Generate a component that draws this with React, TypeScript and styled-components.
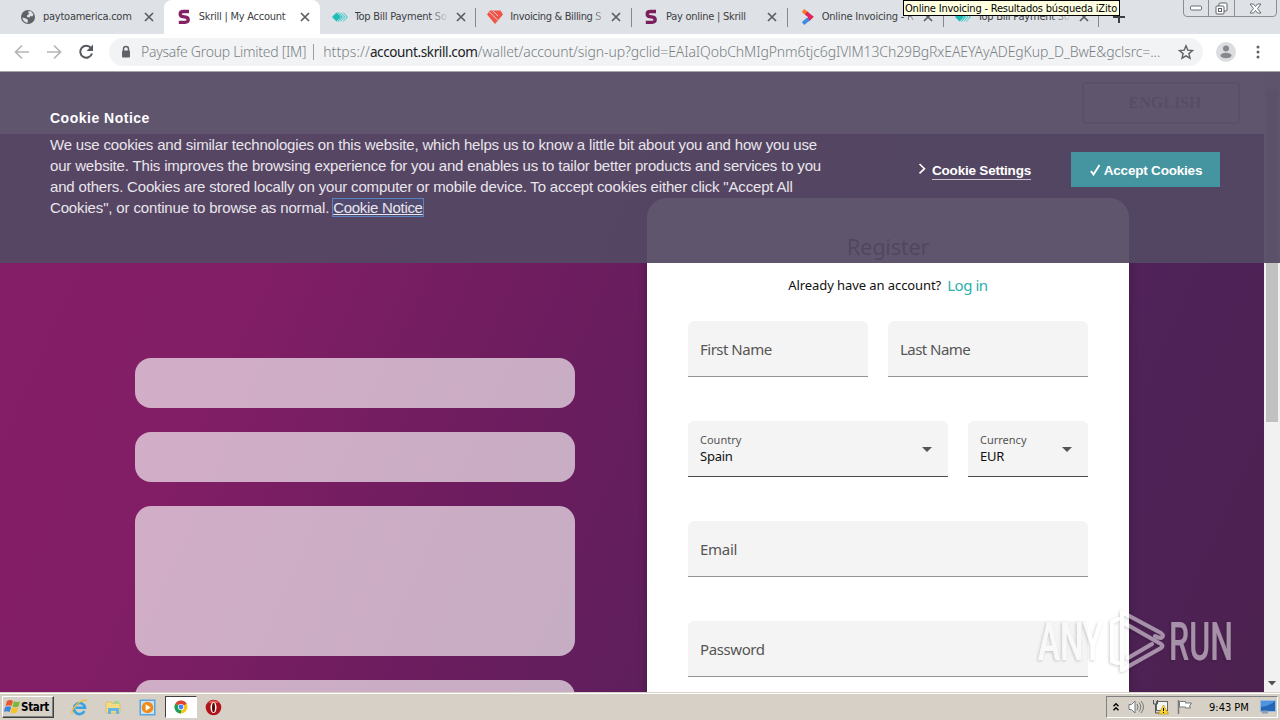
import React from "react";
import styled, { createGlobalStyle } from "styled-components";

const Global = createGlobalStyle`
  * { box-sizing: border-box; }
  body { margin: 0; overflow: hidden; }
`;

const ui = `"DejaVu Sans Condensed", "DejaVu Sans", sans-serif`;
const form = `"Noto Sans", sans-serif`;

const Screen = styled.div`
  position: relative;
  width: 1280px;
  height: 720px;
  display: flex;
  flex-direction: column;
  overflow: hidden;
  font-family: ${ui};
`;

/* ---------- browser chrome ---------- */
const TabStrip = styled.div`
  height: 34px;
  flex: none;
  background: #dee1e6;
  display: flex;
  padding-left: 8px;
`;
const Tab = styled.div<{ $active?: boolean; $line?: boolean }>`
  position: relative;
  width: 155.75px;
  flex: none;
  height: 34px;
  display: flex;
  align-items: center;
  padding-left: 12px;
  color: #3c4043;
  background: ${(p) => (p.$active ? "#fff" : "transparent")};
  border-radius: 8px 8px 0 0;
  &::after {
    content: "";
    position: absolute;
    right: -1px;
    top: 8px;
    width: 1px;
    height: 19px;
    background: ${(p) => (p.$line ? "#85898f" : "transparent")};
  }
  svg { flex: none; }
`;
const TabTitle = styled.span<{ $spacing: number }>`
  width: 94px;
  margin: 0 7px 0 7px;
  font-size: 11px;
  line-height: 18px;
  white-space: nowrap;
  overflow: hidden;
  letter-spacing: ${(p) => p.$spacing}px;
`;
const Fade = styled.span`
  background: linear-gradient(90deg, #6c7074 0, #dee1e6 14px);
  background-clip: text;
  color: transparent;
`;
const NewTab = styled.div`
  display: flex;
  align-items: center;
  padding-left: 15px;
`;
const WindowButtons = styled.div`
  position: absolute;
  top: -1px;
  left: 1183px;
  display: flex;
  height: 18px;
  border: 1px solid #8b8e94;
  border-radius: 0 0 4px 4px;
`;
const WindowButton = styled.div<{ $w: number }>`
  width: ${(p) => p.$w}px;
  display: grid;
  place-items: center;
  border-right: 1px solid #8b8e94;
  &:last-child { border-right: 0; }
`;
const Tooltip = styled.div`
  position: absolute;
  top: 0;
  left: 903px;
  width: 217px;
  height: 16px;
  border: 1px solid #000;
  background: #ffffe1;
  color: #000;
  font-size: 11px;
  line-height: 15px;
  padding-left: 1px;
  white-space: nowrap;
  letter-spacing: -0.2px;
`;
const Toolbar = styled.div`
  height: 38px;
  flex: none;
  background: #fff;
  border-bottom: 1px solid #a5a5ab;
  display: flex;
  align-items: center;
  padding: 0 13px 1px;
`;
const NavIcons = styled.div`
  display: flex;
  gap: 14px;
  width: 96px;
`;
const Omnibox = styled.div`
  width: 1094px;
  height: 28px;
  border-radius: 14px;
  background: #f1f3f4;
  display: flex;
  align-items: center;
  padding: 0 9px 0 11px;
  svg { flex: none; }
`;
const Url = styled.div`
  flex: 1;
  min-width: 0;
  margin-left: 9px;
  padding-bottom: 1px;
  font-size: 14px;
  font-weight: 300;
  font-family: "Noto Sans", sans-serif;
  color: #7b7f84;
  white-space: nowrap;
  display: flex;
  align-items: baseline;
`;
const UrlPart = styled.span<{ $ls: number; $dark?: boolean }>`
  letter-spacing: ${(p) => p.$ls}px;
  color: ${(p) => (p.$dark ? "#202124" : "inherit")};
  font-weight: ${(p) => (p.$dark ? 400 : 300)};
  font-size: ${(p) => (p.$dark ? 13.5 : 14)}px;
`;
const UrlLine = styled.i`
  width: 1px;
  height: 16px;
  align-self: center;
  margin: 0 9px 0 7px;
  background: #9a9da1;
`;
const RightIcons = styled.div`
  display: flex;
  align-items: center;
  gap: 16px;
  margin-left: 13px;
`;

/* ---------- page ---------- */
const Viewport = styled.div`
  height: 620px;
  flex: none;
  display: flex;
  overflow: hidden;
`;
const Page = styled.div`
  width: 1264px;
  height: 620px;
  overflow: hidden;
  background: linear-gradient(114deg, #851f67 0%, #821e66 22%, #6a1d5e 46%, #50225a 78%, #4c2250 100%);
`;
const Header = styled.header`
  height: 62px;
  background: #fff;
  display: flex;
  justify-content: flex-end;
  padding: 10px 24px 0 0;
`;
const Language = styled.div`
  width: 158px;
  height: 42px;
  border: 2px solid #b4b4b4;
  border-radius: 4px;
  text-align: center;
  padding-left: 8px;
  font: bold 16px/38px "Liberation Serif", serif;
  letter-spacing: 0;
  color: #858585;
`;
const Columns = styled.main`
  display: flex;
  align-items: flex-start;
  padding: 64px 0 0 135px;
`;
const Placeholders = styled.div`
  width: 440px;
  margin: 160px 72px 0 0;
  display: flex;
  flex-direction: column;
  gap: 24px;
`;
const Placeholder = styled.div<{ $h: number }>`
  height: ${(p) => p.$h}px;
  border-radius: 16px;
  background: rgba(255, 255, 255, 0.64);
`;
const Card = styled.section`
  width: 482px;
  height: 640px;
  border-radius: 20px;
  background: #fff;
  padding: 33px 41px 0;
  font-family: ${form};
  box-shadow: 0 3px 10px rgba(0, 0, 0, 0.25);
`;
const Title = styled.h1`
  margin: 0;
  text-align: center;
  font-size: 22px;
  font-weight: 400;
  line-height: 30px;
  letter-spacing: -0.35px;
  color: #333;
`;
const LoginRow = styled.div`
  height: 20px;
  margin: 14px 0 26px;
  display: flex;
  justify-content: center;
  align-items: center;
  gap: 6px;
  font-size: 13px;
  letter-spacing: -0.08px;
  white-space: nowrap;
  color: #111;
`;
const LoginLink = styled.a`
  font-size: 15px;
  letter-spacing: -0.45px;
  color: #2bb0ad;
`;
const FieldRow = styled.div<{ $cols: string }>`
  display: grid;
  grid-template-columns: ${(p) => p.$cols};
  gap: 20px;
  margin-bottom: 44px;
`;
const Field = styled.div<{ $dark?: boolean }>`
  height: 56px;
  padding: 0 16px 0 12px;
  display: flex;
  align-items: center;
  justify-content: space-between;
  background: #f4f4f4;
  border-radius: 6px 6px 0 0;
  border-bottom: 1px solid ${(p) => (p.$dark ? "#4a4a4a" : "#939393")};
  color: #555;
  font-size: 15px;
  white-space: nowrap;
  svg { margin-top: 2px; }
`;
const FieldLabel = styled.span<{ $ls: number }>`
  letter-spacing: ${(p) => p.$ls}px;
  padding-top: 1px;
`;
const Stack = styled.div`
  display: flex;
  flex-direction: column;
  padding-bottom: 2px;
  font-size: 13px;
  line-height: 16px;
  letter-spacing: -0.25px;
  color: #111;
`;
const SmallLabel = styled.span`
  font-size: 11px;
  color: #555;
  letter-spacing: 0;
`;
const Scrollbar = styled.div`
  width: 16px;
  background: #f1f1f1;
  display: flex;
  flex-direction: column;
  align-items: center;
  justify-content: space-between;
  padding: 17px 0 6px;
`;
const Thumb = styled.div`
  width: 12px;
  height: 333px;
  background: #c1c1c1;
`;

/* ---------- cookie banner ---------- */
const Banner = styled.aside`
  position: absolute;
  top: 72px;
  left: 0;
  width: 1280px;
  height: 191px;
  background: rgba(83, 73, 99, 0.93);
  color: #fff;
  font-family: "Liberation Sans", Arial, sans-serif;
  display: flex;
  align-items: flex-start;
  padding: 37px 60px 0 50px;
`;
const BannerText = styled.div`
  width: 820px;
  font-size: 15px;
  line-height: 21px;
  white-space: nowrap;
`;
const BannerTitle = styled.div`
  font-size: 14px;
  line-height: 18px;
  font-weight: bold;
  letter-spacing: 0.5px;
  margin-bottom: 7px;
`;
const Line = styled.div<{ $ls: number }>`
  letter-spacing: ${(p) => p.$ls}px;
  color: #e9e5ec;
`;
const NoticeLink = styled.a`
  text-decoration: underline;
  outline: 1px solid #5b83c4;
  background: rgba(70, 90, 140, 0.3);
  letter-spacing: -0.3px;
`;
const Settings = styled.div`
  margin: 49px 0 0 48px;
  width: 153px;
  display: flex;
  align-items: center;
  gap: 6px;
  height: 22px;
  font-size: 13.5px;
  font-weight: bold;
  letter-spacing: -0.2px;
  white-space: nowrap;
`;
const SettingsLabel = styled.span`
  line-height: 17px;
  border-bottom: 1px solid #c9c3d0;
  padding-top: 3px;
`;
const Accept = styled.button`
  margin: 43px 0 0;
  width: 149px;
  height: 35px;
  border: 0;
  padding: 1px 0 0 1px;
  background: #4595a1;
  color: #fff;
  font: bold 13.5px "Liberation Sans", Arial, sans-serif;
  letter-spacing: -0.2px;
  display: flex;
  align-items: center;
  justify-content: center;
  gap: 3px;
  white-space: nowrap;
`;

/* ---------- taskbar ---------- */
const Taskbar = styled.footer`
  height: 28px;
  flex: none;
  background: #d6d0c6;
  border-top: 1px solid #d6d0c6;
  box-shadow: inset 0 1px #fff;
  display: flex;
  align-items: center;
  padding: 1px 2px 0;
`;
const Start = styled.div`
  width: 52px;
  height: 22px;
  border: 1px solid;
  border-color: #fff #404040 #404040 #fff;
  box-shadow: inset -1px -1px #808080;
  display: flex;
  align-items: center;
  padding-left: 1px;
  font: bold 11.5px ${ui};
  letter-spacing: -0.3px;
  color: #000;
`;
const QuickLaunch = styled.div`
  display: flex;
  align-items: center;
  gap: 17px;
  margin-left: 17px;
  flex: 1;
`;
const ActiveApp = styled.div`
  width: 32px;
  height: 22px;
  margin: 0 -7px 0 -8px;
  background: #fff;
  border: 1px solid;
  border-color: #404040 #fff #fff #404040;
  display: grid;
  place-items: center;
`;
const Opera = styled.svg`
  margin-left: -2px;
`;
const Tray = styled.div`
  width: 172px;
  height: 22px;
  border: 1px solid;
  border-color: #808080 #fff #fff #808080;
  display: flex;
  align-items: center;
  padding-left: 5px;
  font-size: 11px;
  color: #000;
`;
const Clock = styled.span`
  margin: 0 11px 0 16px;
  width: 40px;
  white-space: nowrap;
`;
const TrayGap = styled.div`
  display: flex;
  align-items: center;
  gap: 7px;
`;
const Watermark = styled.svg`
  position: absolute;
  left: 1030px;
  top: 600px;
`;

/* ---------- icons ---------- */
const Close = () => (
  <svg width="10" height="10" viewBox="0 0 10 10" stroke="#5a5e63" strokeWidth="1.7">
    <path d="M1 1l8 8M9 1l-8 8" />
  </svg>
);
const Globe = () => (
  <svg width="16" height="16" viewBox="0 0 16 16">
    <circle cx="8" cy="8" r="7" fill="#5f6368" />
    <path d="M2.500 8.500l3.500 1 2 1.500-.5 3C4.500 13.500 2.500 11.500 2.500 8.500zM8 2.200h3l2.500 3-1 2.300-2-.5-1 1.500-2.500-.5V6.500L9 5z" fill="#dee1e6" />
  </svg>
);
const SkrillMark = ({ color }: { color: string }) => (
  <svg width="16" height="16" viewBox="0 0 16 16" fill="none" stroke={color} strokeWidth="3.300">
    <path d="M13 2.500H7.500Q4.200 2.500 4.200 4.900T7 7.600L9.800 8.200Q12.300 8.800 12.200 11T9 13.300H2.800" />
  </svg>
);
const Diamonds = () => (
  <svg width="16" height="16" viewBox="0 0 16 16">
    <path d="M0 8l4.500-4.500L9 8l-4.500 4.500z" fill="#1fbdb8" />
    <path d="M5.500 3.500h1.200L11 8l-4.300 4.500H5.500L9.500 8z" fill="#2cc4bf" />
    <path d="M8 3.500h1.200L13.500 8l-4.300 4.500H8L12 8zM10.700 3.500h1L16 8l-4.300 4.500h-1L14.500 8z" fill="#55d0cb" />
  </svg>
);
const Gem = () => (
  <svg width="16" height="16" viewBox="0 0 16 16">
    <path d="M3 1.500h10.500L16 5.500 8 15 0 5.500z" fill="#ef5548" />
    <path d="M2.500 3l8 8M6 2l5 5" stroke="#dee1e6" strokeWidth="0.900" />
  </svg>
);
const Arrowhead = () => (
  <svg width="16" height="16" viewBox="0 0 16 16" fill="none" strokeWidth="3.800">
    <path d="M4 1.500l5 4" stroke="#f47b20" />
    <path d="M7 4l5 4-3 3" stroke="#e0245e" />
    <path d="M9.500 10L4 14.500" stroke="#3b8ede" />
  </svg>
);
const Chrome = () => (
  <svg width="14" height="14" viewBox="0 0 14 14">
    <circle cx="7" cy="7" r="6.500" fill="#f9c513" />
    <path d="M7 7L1.370 3.750A6.500 6.500 0 0 1 12.630 3.750z" fill="#dc4437" />
    <path d="M7 7L1.370 3.750A6.500 6.500 0 0 0 7 13.500z" fill="#1ba05c" />
    <circle cx="7" cy="7" r="3.100" fill="#fff" />
    <circle cx="7" cy="7" r="2.400" fill="#4285f4" />
  </svg>
);
const Caret = () => (
  <svg width="10" height="5" viewBox="0 0 10 5"><path d="M0 0h10L5 5z" fill="#555" /></svg>
);

const tabs = [
  { title: "paytoamerica.com", icon: <Globe />, ls: -0.25 },
  { title: "Skrill | My Account", icon: <SkrillMark color="#862165" />, ls: -0.25, active: true },
  { title: "Top Bill Payment ", tail: "So", icon: <Diamonds />, ls: -0.23, line: true },
  { title: "Invoicing & Billing ", tail: "S", icon: <Gem />, ls: -0.35, line: true },
  { title: "Pay online | Skrill", icon: <SkrillMark color="#7a1f5c" />, ls: -0.26, line: true },
  { title: "Online Invoicing - ", tail: "R", icon: <Arrowhead />, ls: -0.23, line: true },
  { title: "Top Bill Payment ", tail: "So", icon: <Diamonds />, ls: -0.23, line: true },
];

export default function App() {
  return (
    <Screen>
      <Global />
      <TabStrip>
        {tabs.map((t, i) => (
          <Tab key={i} $active={t.active} $line={t.line}>
            {t.icon}
            <TabTitle $spacing={t.ls}>{t.title}{t.tail && <Fade>{t.tail}</Fade>}</TabTitle>
            <Close />
          </Tab>
        ))}
        <NewTab>
          <svg width="12" height="12" viewBox="0 0 12 12" stroke="#3c4043" strokeWidth="2"><path d="M6 0v12M0 6h12" /></svg>
        </NewTab>
      </TabStrip>
      <Toolbar>
        <NavIcons>
          <svg width="18" height="18" viewBox="0 0 18 18" fill="none" stroke="#b4b6b9" strokeWidth="1.700"><path d="M16 9H3M9 2.500L2.500 9 9 15.500" /></svg>
          <svg width="18" height="18" viewBox="0 0 18 18" fill="none" stroke="#b4b6b9" strokeWidth="1.700"><path d="M2 9h13M9 2.500L15.500 9 9 15.500" /></svg>
          <svg width="18" height="18" viewBox="0 0 18 18" fill="none"><path d="M14 5a6 6 0 1 0 1 5.500" stroke="#55595e" strokeWidth="2" /><path d="M16 1.500V8H9.500z" fill="#55595e" /></svg>
        </NavIcons>
        <Omnibox>
          <svg width="12" height="14" viewBox="0 0 12 14"><path d="M3.500 6V4a2.500 2.500 0 0 1 5 0v2" fill="none" stroke="#5f6368" strokeWidth="1.500" /><rect x="2" y="5.500" width="8" height="7" rx="1" fill="#5f6368" /></svg>
          <Url>
            <UrlPart $ls={-0.28}>Paysafe Group Limited [IM]</UrlPart>
            <UrlLine />
            <UrlPart $ls={0.1}>https://</UrlPart>
            <UrlPart $ls={-0.38} $dark>account.skrill.com</UrlPart>
            <UrlPart $ls={-0.1}>/wallet/account/sign-up?gclid=EAIaIQobChMIgPnm6tjc6gIVlM13Ch29BgRxEAEYAyADEgKup_D_BwE&amp;gclsrc=...</UrlPart>
          </Url>
          <svg width="16" height="16" viewBox="0 0 16 16" fill="none" stroke="#5f6368" strokeWidth="1.400"><path d="M8 1.800l1.800 4.300 4.700.4-3.600 3.100 1.100 4.600L8 11.800l-4 2.400 1.100-4.600L1.500 6.500l4.700-.4z" /></svg>
        </Omnibox>
        <RightIcons>
          <svg width="20" height="20" viewBox="0 0 20 20"><circle cx="10" cy="10" r="10" fill="#dcdddf" /><circle cx="10" cy="6.500" r="3" fill="#85888c" /><ellipse cx="10" cy="13.500" rx="5.500" ry="2.800" fill="#85888c" /></svg>
          <svg width="12" height="14" viewBox="0 0 12 14" fill="#5f6368" transform="translate(1 0)"><circle cx="5" cy="2" r="1.500" /><circle cx="5" cy="7" r="1.500" /><circle cx="5" cy="12" r="1.500" /></svg>
        </RightIcons>
      </Toolbar>

      <Viewport>
        <Page>
          <Header><Language>ENGLISH</Language></Header>
          <Columns>
            <Placeholders>
              <Placeholder $h={50} />
              <Placeholder $h={50} />
              <Placeholder $h={150} />
              <Placeholder $h={50} />
            </Placeholders>
            <Card>
              <Title>Register</Title>
              <LoginRow>Already have an account? <LoginLink>Log in</LoginLink></LoginRow>
              <FieldRow $cols="180px 200px">
                <Field><FieldLabel $ls={-0.5}>First Name</FieldLabel></Field>
                <Field><FieldLabel $ls={-0.55}>Last Name</FieldLabel></Field>
              </FieldRow>
              <FieldRow $cols="260px 120px">
                <Field $dark><Stack><SmallLabel>Country</SmallLabel>Spain</Stack><Caret /></Field>
                <Field $dark><Stack><SmallLabel>Currency</SmallLabel>EUR</Stack><Caret /></Field>
              </FieldRow>
              <FieldRow $cols="400px"><Field><FieldLabel $ls={-0.3}>Email</FieldLabel></Field></FieldRow>
              <FieldRow $cols="400px"><Field><FieldLabel $ls={-0.4}>Password</FieldLabel></Field></FieldRow>
            </Card>
          </Columns>
        </Page>
        <Scrollbar>
          <Thumb />
          <svg width="8" height="5" viewBox="0 0 8 5"><path d="M0 0h8L4 4.500z" fill="#505050" /></svg>
        </Scrollbar>
      </Viewport>

      <Taskbar>
        <Start>
          <svg width="17" height="16" viewBox="0 0 17 16">
            <path d="M3 2q3-2 6 0L7.500 7q-3-1.500-6 0z" fill="#e8582a" />
            <path d="M10 2.300q3 1.500 6 0L14.500 7.500q-3 1.500-6 0z" fill="#7bb83a" />
            <path d="M1.200 8q3-1.700 6 0L5.700 13q-3-1.500-6 0z" fill="#3d86d8" />
            <path d="M8.200 8.300q3 1.500 6 0L12.700 13.500q-3 1.500-6 0z" fill="#f8c326" />
          </svg>
          Start
        </Start>
        <QuickLaunch>
          <svg width="17" height="17" viewBox="0 0 17 17" fill="none"><path d="M13.500 12A5.500 5.500 0 1 1 14 8.800H5" stroke="#38a3e4" strokeWidth="2.600" /><path d="M1.500 15C-1 11 10-1 16 1.500" stroke="#efbd32" strokeWidth="1.300" /></svg>
          <svg width="17" height="17" viewBox="0 0 17 17"><path d="M1 3h5l1 1.500h8V14H1z" fill="#f3dc82" stroke="#d5b650" strokeWidth=".6" /><path d="M3 9h11v6h-3v-3H6v3H3z" fill="#62b5e5" /><path d="M9 2h5v3H9z" fill="#a5d48a" /></svg>
          <svg width="17" height="17" viewBox="0 0 17 17"><rect x=".5" y=".5" width="16" height="16" fill="#5aa3df" /><rect x="2" y="2" width="13" height="13" fill="#c9e3f6" /><circle cx="8.500" cy="8.500" r="5.800" fill="#f28a1a" /><path d="M6.700 5.200v6.600l5-3.300z" fill="#fff" /></svg>
          <ActiveApp><Chrome /></ActiveApp>
          <Opera width="17" height="17" viewBox="0 0 17 17"><circle cx="8.500" cy="8.500" r="7.800" fill="#b41218" /><path d="M3 4a7 7 0 0 1 11 0z" fill="#dd5a55" /><ellipse cx="8.500" cy="8.500" rx="3" ry="5.600" fill="#fff" /><ellipse cx="8.500" cy="8.500" rx="1.500" ry="4.700" fill="#5e0b0e" /></Opera>
        </QuickLaunch>
        <Tray>
          <TrayGap>
            <svg width="8" height="10" viewBox="0 0 8 10" fill="none" stroke="#000" strokeWidth="1.400"><path d="M1.500 4.200l2.500-2.500 2.500 2.500M1.500 8.200l2.500-2.500 2.500 2.500" /></svg>
            <svg width="18" height="16" viewBox="0 0 18 16" fill="#fff" stroke="#77797c" strokeWidth="1"><path d="M2 5.500h2.500L8 2v12l-3.500-3.500H2z" /><path d="M10 5q2 3 0 6M12 3.500q3.500 4.500 0 9M14 2q5 6 0 12" fill="none" /></svg>
            <svg width="17" height="16" viewBox="0 0 17 16"><rect x="4.500" y="2.500" width="11" height="9" fill="#f4f4f4" stroke="#666" /><path d="M1.500 1v4h4V1M3.500 5v9h4" fill="none" stroke="#555" /><path d="M11.500 6l5 9h-10z" fill="#ffd52e" stroke="#b08c00" strokeWidth=".6" /><path d="M11.500 9v3M11.500 13v1" stroke="#000" /></svg>
            <svg width="17" height="16" viewBox="0 0 17 16" fill="#fff" stroke="#77797c"><path d="M2.500 1v14" strokeWidth="1.500" /><path d="M3.500 2.500h6v1.500h6l-2 3 1 2h-5V8h-6z" /></svg>
          </TrayGap>
          <Clock>9:43 PM</Clock>
          <svg width="16" height="14" viewBox="0 0 16 14"><rect x=".5" y=".5" width="15" height="11" fill="#2467b8" stroke="#9db8d8" /><path d="M1 7Q8 7 15 1H1z" fill="#4d93dd" /><path d="M2 10.500h6v3H2z" fill="#8a9fb5" /></svg>
        </Tray>
      </Taskbar>

      <Banner>
        <BannerText>
          <BannerTitle>Cookie Notice</BannerTitle>
          <Line $ls={-0.175}>We use cookies and similar technologies on this website, which helps us to know a little bit about you and how you use</Line>
          <Line $ls={-0.175}>our website. This improves the browsing experience for you and enables us to tailor better products and services to you</Line>
          <Line $ls={-0.175}>and others. Cookies are stored locally on your computer or mobile device. To accept cookies either click "Accept All</Line>
          <Line $ls={-0.15}>Cookies", or continue to browse as normal. <NoticeLink>Cookie Notice</NoticeLink></Line>
        </BannerText>
        <Settings>
          <svg width="8" height="12" viewBox="0 0 8 12" fill="none" stroke="#fff" strokeWidth="1.600"><path d="M1.500 1l5 4.700-5 4.700" /></svg>
          <SettingsLabel>Cookie Settings</SettingsLabel>
        </Settings>
        <Accept>
          <svg width="11" height="12" viewBox="0 0 11 12" fill="none" stroke="#fff" strokeWidth="1.900"><path d="M1 7l2.500 3.500L9.500 1" /></svg>
          Accept Cookies
        </Accept>
      </Banner>

      <Watermark width="215" height="80" viewBox="0 0 215 80">
        <defs>
          <filter id="soft" x="-10%" y="-10%" width="120%" height="130%">
            <feDropShadow dx="-1" dy="1" stdDeviation="1.800" floodColor="#000" floodOpacity="0.4" />
          </filter>
        </defs>
        <g filter="url(#soft)" opacity="0.5" fill="#fff">
          <text x="8" y="60" fontFamily="Roboto, sans-serif" fontSize="53" fontWeight="500" textLength="65" lengthAdjust="spacingAndGlyphs">ANY</text>
          <text x="139" y="60" fontFamily="Roboto, sans-serif" fontSize="53" fontWeight="500" textLength="64" lengthAdjust="spacingAndGlyphs">RUN</text>
          <g fill="none" stroke="#fff" strokeWidth="4" strokeLinejoin="round" strokeLinecap="round">
            <path d="M88 19L82 22V61L88 63" />
            <path d="M92 62V70L131 48Q134 46 131 44L96 24" />
            <path d="M92 60V12L131 33Q135 36 131 38Q128 38 125 36" />
            <path d="M98 58L122 44" />
          </g>
        </g>
      </Watermark>
      <WindowButtons>
        <WindowButton $w={25}><svg width="13" height="6" viewBox="0 0 13 6"><rect x=".5" y="1" width="11" height="4" rx="1" fill="#fff" stroke="#6b6e73" /></svg></WindowButton>
        <WindowButton $w={26}><svg width="13" height="13" viewBox="0 0 13 13" fill="#fff" stroke="#5e6166"><rect x="4" y="1" width="8" height="8" rx="1" /><rect x="1" y="4" width="8" height="8" rx="1" /><rect x="3.500" y="6.500" width="3" height="3" /></svg></WindowButton>
        <WindowButton $w={41}><svg width="13" height="11" viewBox="0 0 13 11" fill="#fff" stroke="#6b6e73"><path d="M1 1h3.500l2 2.500 2-2.500H12L8.500 5.500 12 10H8.500l-2-2.500-2 2.500H1l3.500-4.500z" /></svg></WindowButton>
      </WindowButtons>
      <Tooltip>Online Invoicing - Resultados búsqueda iZito</Tooltip>
    </Screen>
  );
}
